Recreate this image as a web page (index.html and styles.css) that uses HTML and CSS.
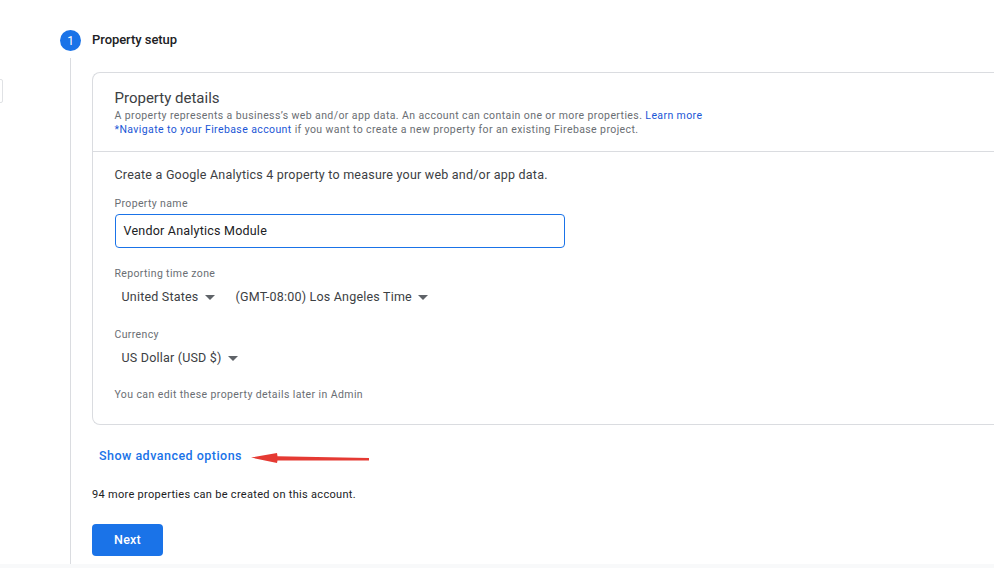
FILE: index.html
```html
<!DOCTYPE html>
<html lang="en">
<head>
<meta charset="utf-8">
<title>Property setup</title>
<link rel="stylesheet" href="styles.css">
</head>
<body>
<div class="stub"></div>
<main class="page">
  <header class="step-head">
    <span class="step-num">1</span>
    <h2 class="step-title">Property setup</h2>
  </header>
  <section class="step-body">
    <div class="card">
      <div class="card-head">
        <h3 class="card-title">Property details</h3>
        <p class="card-desc">A property represents a business’s web and/or app data. An account can contain one or more properties. <a class="link" href="#">Learn more</a></p>
        <p class="card-desc"><a class="link" href="#">*Navigate to your Firebase account</a> if you want to create a new property for an existing Firebase project.</p>
      </div>
      <div class="card-body">
        <p class="lead">Create a Google Analytics 4 property to measure your web and/or app data.</p>
        <label class="field-label label-name">Property name</label>
        <div class="input">Vendor Analytics Module</div>
        <div class="field-label label-zone">Reporting time zone</div>
        <div class="selects">
          <span class="select">United States<i class="caret"></i></span>
          <span class="select">(GMT-08:00) Los Angeles Time<i class="caret"></i></span>
        </div>
        <div class="field-label label-currency">Currency</div>
        <div class="selects">
          <span class="select">US Dollar (USD $)<i class="caret"></i></span>
        </div>
        <p class="note">You can edit these property details later in Admin</p>
      </div>
    </div>
    <div class="advanced-row">
      <a class="advanced" href="#">Show advanced options</a>
      <svg class="arrow" width="120" height="14" viewBox="0 0 120 14" aria-hidden="true">
        <path d="M0 6.5 L26 2 L26.5 5.2 L118 7 L118 9.6 L26.5 9.4 L26 12 Z" fill="#e53a33"/>
      </svg>
    </div>
    <p class="quota">94 more properties can be created on this account.</p>
    <button class="next" type="button">Next</button>
  </section>
</main>
<div class="footer-band"></div>
</body>
</html>
```

FILE: styles.css
```css
* { box-sizing: border-box; }
html, body { margin: 0; padding: 0; height: 568px; overflow: hidden; background: #fff; }
body { font-family: Roboto, "Liberation Sans", sans-serif; color: #202124; position: relative; }
h2, h3, p { margin: 0; font-weight: 400; }

.stub { position: absolute; left: -6px; top: 79px; width: 9px; height: 24px; border: 1px solid #e0e2e5; border-radius: 2px; }

.page { padding: 30px 0 0 60px; height: 564px; display: flex; flex-direction: column; width: 994px; overflow: hidden; }
.step-head { display: flex; align-items: center; gap: 11px; height: 21px; }
.step-num { width: 21px; height: 21px; border-radius: 50%; background: #1a73e8; color: #fff; font-size: 12px; display: flex; align-items: center; justify-content: center; }
.step-title { font-size: 13px; line-height: 19px; padding-bottom: 2px; font-weight: 500; letter-spacing: -0.05px; color: #202124; }

.step-body { margin: 7px 0 0 10px; border-left: 1px solid #dadce0; padding: 14px 0 0 21px; flex: 1; min-height: 0; overflow: hidden; }

.card { border: 1px solid #dadce0; border-right: 0; border-radius: 8px 0 0 8px; height: 353px; }
.card-head { height: 79px; padding: 16px 21.5px 0; border-bottom: 1px solid #dadce0; }
.card-title { font-size: 15px; line-height: 18px; margin-bottom: 2px; color: #3c4043; }
.card-desc { font-size: 10.5px; line-height: 14px; letter-spacing: 0.4px; color: #6a6e73; white-space: nowrap; }
.link { color: #1a56d6; text-decoration: none; }

.card-body { padding: 15px 21.5px 0; }
.lead { font-size: 12.5px; line-height: 16px; letter-spacing: 0.22px; color: #3c4043; }
.field-label { font-size: 10.5px; line-height: 14px; letter-spacing: 0.36px; color: #6a6e73; }
.label-name { display: block; margin-top: 14px; }
.input { margin-top: 3px; width: 450px; height: 34px; border: 1px solid #1a73e8; border-radius: 4px; padding: 0 8px; font-size: 12.5px; line-height: 31px; letter-spacing: 0.22px; color: #202124; }
.label-zone { margin-top: 19px; }
.label-currency { margin-top: 23px; }
.selects { display: flex; gap: 21px; padding: 8px 0 0 7px; }
.select { display: inline-flex; align-items: center; font-size: 12.5px; line-height: 16px; letter-spacing: 0.2px; color: #3c4043; }
.caret { width: 0; height: 0; margin-left: 6px; border-left: 5px solid transparent; border-right: 5px solid transparent; border-top: 5px solid #5f6368; }
.note { margin-top: 22px; font-size: 10.5px; line-height: 14px; letter-spacing: 0.4px; color: #6a6e73; }

.advanced-row { display: flex; align-items: center; margin-top: 21px; height: 18px; padding-left: 7px; }
.advanced { font-size: 12.5px; font-weight: 500; letter-spacing: 0.48px; color: #1a73e8; text-decoration: none; }
.arrow { margin: 6px 0 0 9px; flex: none; }
.quota { margin-top: 24px; font-size: 11px; line-height: 14px; letter-spacing: 0.3px; color: #202124; }
.next { display: block; margin-top: 22px; width: 71px; height: 32px; padding: 0 0 2px; background: #1a73e8; color: #fff; border: 0; border-radius: 4px; font-family: inherit; font-size: 12.5px; font-weight: 500; letter-spacing: 0.2px; }

.footer-band { height: 4px; background: #f8f9fa; }
```
